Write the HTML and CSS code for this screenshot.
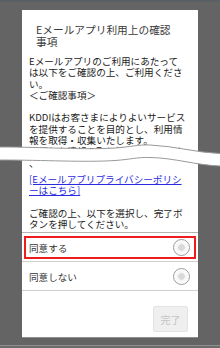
FILE: index.html
```html
<!DOCTYPE html>
<html lang="ja">
<head>
<meta charset="utf-8">
<title>Eメールアプリ利用上の確認事項</title>
<link rel="stylesheet" href="styles.css">
</head>
<body>
<div class="screen">
  <div class="statusbar"></div>
  <div class="stage">
    <section class="dialog">
      <h1 class="title">Eメールアプリ利用上の確認<br>事項</h1>
      <div class="content">
        <p>Eメールアプリのご利用にあたって<br>は以下をご確認の上、ご利用くださ<br>い。<br>＜ご確認事項＞</p>
        <p>KDDIはお客さまによりよいサービス<br>を提供することを目的とし、利用情<br>報を取得・収集いたします。<br>取得した情報の取り扱いについては<br>、</p>
        <p class="linkline"><a href="#">[Eメールアプリプライバシーポリシ<br>ーはこちら]</a></p>
        <p>ご確認の上、以下を選択し、完了ボ<br>タンを押してください。</p>
      </div>
      <ul class="options">
        <li class="option">
          <div class="option-box focused"><span>同意する</span><span class="radio"></span></div>
        </li>
        <li class="option">
          <div class="option-box"><span>同意しない</span><span class="radio"></span></div>
        </li>
      </ul>
      <div class="footer">
        <button class="done" type="button">完了</button>
      </div>
    </section>
  </div>
  <div class="navbar"></div>
  <svg class="cut" width="220" height="28" viewBox="0 0 220 28" aria-hidden="true">
    <path d="M0,7 C45,7 85,10 115,8 C130,7 138,4.5 150,5 C175,6 195,12.5 220,13.5 L220,26 C195,25 175,18 150,17.5 C138,17 130,19.5 115,20.5 C85,22.5 45,20 0,20 Z" fill="#ffffff"/>
    <path d="M0,7 C45,7 85,10 115,8 C130,7 138,4.5 150,5 C175,6 195,12.5 220,13.5" fill="none" stroke="#9a9a9a" stroke-width="1"/>
    <path d="M220,26 C195,25 175,18 150,17.5 C138,17 130,19.5 115,20.5 C85,22.5 45,20 0,20" fill="none" stroke="#9a9a9a" stroke-width="1"/>
  </svg>
</div>
</body>
</html>
```
FILE: styles.css
```css
* {
  box-sizing: border-box;
}

html, body {
  margin: 0;
  padding: 0;
}

body {
  background: #646464;
  font-family: "Noto Sans CJK JP", "Noto Sans", sans-serif;
}

.screen {
  position: relative;
  width: 220px;
  height: 348px;
  display: flex;
  flex-direction: column;
  overflow: hidden;
}

.statusbar {
  flex: none;
  height: 2px;
  background: #5b6066;
}

.stage {
  flex: 1;
  padding: 8px 22px 0;
}

.dialog {
  width: 176px;
  height: 327px;
  background: #ffffff;
  display: flex;
  flex-direction: column;
  box-shadow: 0 1px 0 #8e8e8e;
}

.title {
  flex: none;
  margin: 0;
  padding: 14px 0 0 14px;
  font-size: 10.7px;
  line-height: 12px;
  font-weight: normal;
  color: #3a3a3a;
}

.content {
  flex: 1;
  min-height: 0;
  overflow: hidden;
  padding: 8px 0 0 7px;
  font-size: 9.6px;
  line-height: 11.3px;
  color: #1a1a1a;
  white-space: nowrap;
}

.content p {
  margin: 0 0 11.3px;
}

.content .linkline {
  margin-top: -6.3px;
}

.content a {
  color: #2a2ae0;
  text-decoration: underline;
}

.options {
  flex: none;
  list-style: none;
  margin: 0;
  padding: 0;
  border-top: 1px solid #b4b4b4;
}

.option {
  padding: 3px 2px 2px;
  border-bottom: 1px solid #cfcfcf;
}

.option-box {
  height: 23px;
  border: 2px solid transparent;
  display: flex;
  align-items: center;
  justify-content: space-between;
  padding: 0 4px 0 3px;
  font-size: 9.6px;
  color: #333333;
}

.option-box.focused {
  border-color: #ee1c1c;
}

.radio {
  width: 17px;
  height: 17px;
  border-radius: 50%;
  border: 1px solid #9c9c9c;
  background: radial-gradient(circle, #d9d9d9 0 3px, #f4f4f4 3.5px, #ffffff 8px);
}

.footer {
  flex: none;
  height: 46px;
  display: flex;
  justify-content: flex-end;
  align-items: flex-start;
  padding: 15px 10px 0 0;
}

.done {
  width: 35px;
  height: 26px;
  margin: 0;
  padding: 0;
  border: 1px solid #e4e4e4;
  border-radius: 2px;
  background: #efefef;
  color: #c4c4c4;
  font-family: inherit;
  font-size: 10px;
}

.navbar {
  height: 3px;
  border-top: 1px solid #8f8f8f;
  background: #6c6c6c;
}

.cut {
  position: absolute;
  left: 0;
  top: 140px;
}
```
